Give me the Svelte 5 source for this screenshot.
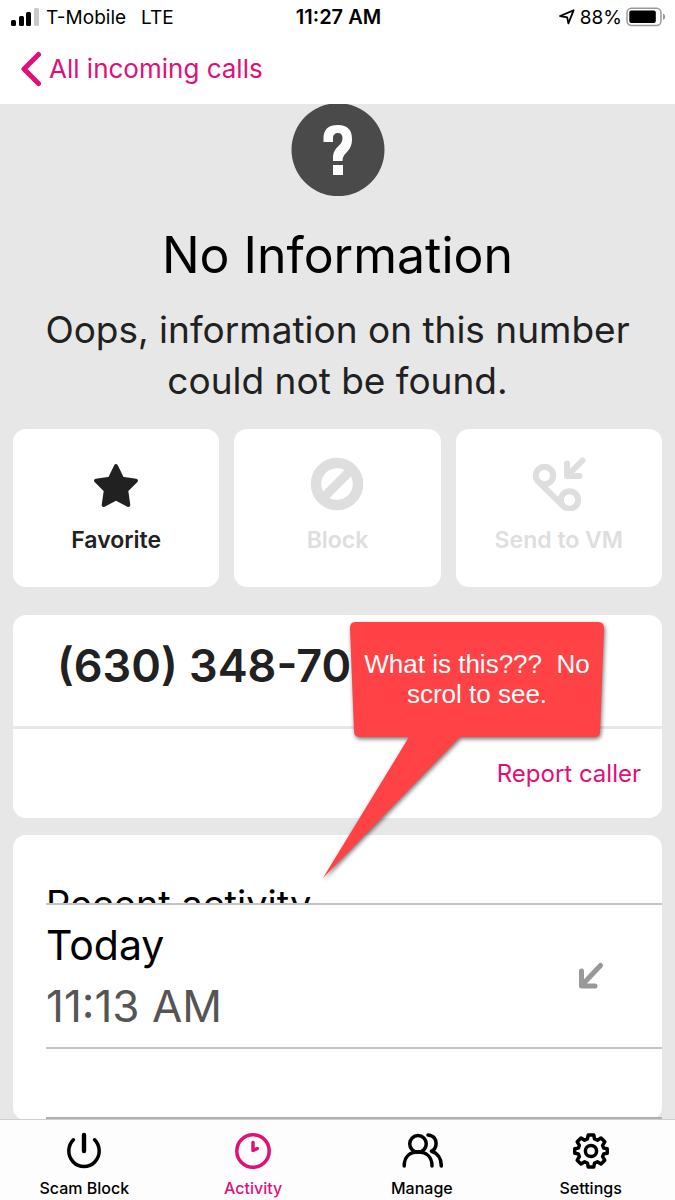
<script lang="ts">
    const tabs = ["Scam Block", "Activity", "Manage", "Settings"];
    let active = "Activity";
</script>

<div class="screen">
    <header>
        <div class="status">
            <div class="carrier">
                <svg width="28" height="18" viewBox="0 0 28 18">
                    <rect x="0" y="12" width="5" height="6" rx="1.5" />
                    <rect x="8" y="8" width="5" height="10" rx="1.5" />
                    <rect x="15" y="4" width="5" height="14" rx="1.5" />
                    <rect x="23" y="0" width="5" height="18" rx="1.5" fill="#c9c9c9" />
                </svg>
                <span>T-Mobile</span>
                <span class="network">LTE</span>
            </div>
            <time>11:27 AM</time>
            <div class="battery">
                <svg width="18" height="16" viewBox="0 0 18 16">
                    <path d="M2 7 15.6 1.3 10.4 14.4 9.2 8.3Z" fill="none" stroke="#000" stroke-width="1.8" stroke-linejoin="round" />
                </svg>
                <span>88%</span>
                <svg width="40" height="20" viewBox="0 0 40 20">
                    <rect x="1" y="1.2" width="34" height="17.3" rx="4.5" fill="#fff" stroke="#999" stroke-width="1.5" />
                    <rect x="3.3" y="3.6" width="26.5" height="12.5" rx="2" />
                    <path d="M37 6.5Q39.2 7.6 39.2 9.8T37 13Z" fill="#999" />
                </svg>
            </div>
        </div>
        <a class="back" href="#calls">
            <svg width="22" height="36" viewBox="0 0 22 36">
                <path d="M18.5 3.5 4 18 18.5 32.5" fill="none" stroke="currentColor" stroke-width="5" stroke-linecap="round" stroke-linejoin="round" />
            </svg>
            All incoming calls
        </a>
    </header>

    <main>
        <svg class="unknown" width="94" height="92" viewBox="0 0 94 92">
            <circle cx="47" cy="45.7" r="46.5" fill="#4a4a4a" />
            <path d="M32.5 38V34C32.5 25.5 37.5 21 47 21S61 26 61 35C61 42 58.5 45.5 55 49C52.3 51.7 51.5 54 51.5 57H42V54C42 48.5 44 45.5 47.5 42C50 39.5 51.5 37.5 51.5 34C51.5 31 50 29 47 29S42 31 42 34V38Z" fill="#fff" />
            <rect x="42" y="61" width="10" height="10" fill="#fff" />
        </svg>
        <h1>No Information</h1>
        <p class="lead">Oops, information on this number could not be found.</p>

        <div class="actions">
            <button>
                <svg width="54" height="54" viewBox="0 0 54 54">
                    <path d="M27 9 33.2 21.8 47 23.7 37.2 33.4 39.3 48 27 41.5 14.7 48 16.8 33.4 7 23.7 20.8 21.8Z" fill="currentColor" stroke="currentColor" stroke-width="4" stroke-linejoin="round" />
                </svg>
                Favorite
            </button>
            <button disabled>
                <svg width="54" height="54" viewBox="0 0 54 54">
                    <circle cx="27" cy="27" r="21" fill="none" stroke="currentColor" stroke-width="10.5" />
                    <path d="M13 41 41 13" stroke="currentColor" stroke-width="9" />
                </svg>
                Block
            </button>
            <button disabled>
                <svg width="54" height="54" viewBox="0 0 54 54">
                    <g fill="none" stroke="currentColor" stroke-width="6" stroke-linecap="round" stroke-linejoin="round">
                        <circle cx="12.5" cy="18.5" r="8.7" />
                        <circle cx="37.5" cy="43" r="8.7" />
                        <path d="M6.3 24.7 31.3 49.2" />
                        <path d="M50.5 3.5 36 18M35 6.5V19H47.5" />
                    </g>
                </svg>
                Send to VM
            </button>
        </div>

        <section class="card caller">
            <div class="number">(630) 348-70</div>
            <div class="report"><a href="#report">Report caller</a></div>

            <div class="callout">
                <svg width="290" height="266" viewBox="0 0 290 266">
                    <path d="M33 1H276Q282 1 282 7L278 111Q278 116 272 116H138L1 257 87 116H38Q32 116 32 110L28 7Q28 1 33 1Z" fill="#ff4245" />
                </svg>
                <p>What is this???&nbsp; No<br />scrol to see.</p>
            </div>
        </section>

        <section class="card recent">
            <h2>Recent activity</h2>
            <ul>
                <li>
                    <div>
                        <div class="day">Today</div>
                        <div class="time">11:13 AM</div>
                    </div>
                    <svg width="26" height="28" viewBox="0 0 26 28">
                        <path d="M22.5 3.5 4 23M3.5 9V24H17" fill="none" stroke="#989898" stroke-width="5" stroke-linecap="round" stroke-linejoin="round" />
                    </svg>
                </li>
                <li class="empty"></li>
            </ul>
        </section>
    </main>

    <nav>
        {#each tabs as tab}
            <button class:active={tab === active} on:click={() => (active = tab)}>
                <svg width="42" height="38" viewBox="0 0 42 38">
                    <g fill="none" stroke="currentColor" stroke-width="3.5" stroke-linecap="round" stroke-linejoin="round">
                        {#if tab === "Scam Block"}
                            <path d="M21 3V19" stroke-width="4.4" />
                            <path d="M10.4 7.8A15.2 15.6 0 1 0 31.6 7.8" />
                        {:else if tab === "Activity"}
                            <circle cx="21" cy="19" r="16.2" />
                            <path d="M21 10.5V18.5L25.3 16.5" />
                        {:else if tab === "Manage"}
                            <circle cx="17" cy="11.8" r="8.3" />
                            <path d="M3.2 34C3.2 25 8.5 20.1 17 20.1S31 25 31 34" />
                            <path d="M27 3C33 3.5 35.5 7.5 35 12.5C34.7 16 32 18.5 30.5 19.2C36.5 21 40.3 26.5 40.3 34" />
                        {:else}
                            <circle cx="21" cy="19" r="5.6" />
                            <path d="M18.3 3H23.7L24.6 7 27.4 8.2 31 6 34.8 9.8 32.6 13.4 33.7 16.1 37.2 16.8V21.2L33.7 21.9 32.6 24.6 34.8 28.2 31 32 27.4 29.8 24.6 31 23.7 35H18.3L17.4 31 14.6 29.8 11 32 7.2 28.2 9.4 24.6 8.3 21.9 4.8 21.2V16.8L8.3 16.1 9.4 13.4 7.2 9.8 11 6 14.6 8.2 17.4 7Z" />
                        {/if}
                    </g>
                </svg>
                {tab}
            </button>
        {/each}
    </nav>
</div>

<style>
    :global(body) {
        margin: 0;
        background: #e7e7e7;
    }
    .screen {
        display: flex;
        flex-direction: column;
        min-height: 100vh;
        font-family: Inter, "Liberation Sans", sans-serif;
        color: #000;
    }
    button {
        font-family: inherit;
        border: none;
        padding: 0;
    }
    a {
        color: #e20f78;
        text-decoration: none;
    }
    header {
        background: #fff;
        height: 104px;
    }
    .status {
        display: grid;
        grid-template-columns: 1fr auto 1fr;
        align-items: center;
        padding: 0 9px 0 11px;
        height: 34px;
        font-size: 19px;
    }
    .status time {
        font-size: 20px;
        font-weight: 600;
    }
    .carrier,
    .battery {
        display: flex;
        align-items: center;
        gap: 7px;
    }
    .network {
        margin-left: 8px;
    }
    .battery {
        justify-content: flex-end;
        gap: 4px;
    }
    .back {
        display: inline-flex;
        align-items: center;
        gap: 7px;
        margin-left: 20px;
        height: 69px;
        font-size: 26px;
    }
    main {
        flex: 1;
        display: flex;
        flex-direction: column;
        padding: 0 13px;
    }
    .unknown {
        align-self: center;
    }
    h1 {
        margin: 26px 0 0;
        font-size: 50px;
        font-weight: 400;
        line-height: 66px;
        text-align: center;
    }
    .lead {
        margin: 16px 20px 0;
        font-size: 37px;
        line-height: 51px;
        text-align: center;
        color: #212121;
    }
    .actions {
        display: grid;
        grid-template-columns: repeat(3, 1fr);
        gap: 15px;
        margin-top: 23px;
    }
    .actions button {
        display: flex;
        flex-direction: column;
        align-items: center;
        gap: 15px;
        height: 158px;
        padding-top: 28px;
        border-radius: 13px;
        background: #fff;
        color: #212121;
        font-size: 23px;
        font-weight: 600;
        line-height: 28px;
    }
    .actions button:disabled {
        color: #dedede;
    }
    .card {
        background: #fff;
        border-radius: 13px;
    }
    .caller {
        position: relative;
        margin-top: 28px;
    }
    .number {
        height: 111px;
        padding-left: 44px;
        border-bottom: 3px solid #e7e7e7;
        font-size: 45px;
        font-weight: 600;
        line-height: 102px;
        color: #212121;
    }
    .report {
        padding-right: 21px;
        font-size: 24px;
        line-height: 89px;
        text-align: right;
    }
    .callout {
        position: absolute;
        top: 6px;
        left: 309px;
        width: 290px;
    }
    .callout svg {
        display: block;
        filter: drop-shadow(1px 2px 2px rgba(0, 0, 0, 0.55));
    }
    .callout p {
        position: absolute;
        top: 28px;
        left: 28px;
        width: 254px;
        margin: 0;
        font-family: "Liberation Sans", Arial, sans-serif;
        font-size: 26px;
        line-height: 30px;
        text-align: center;
        white-space: nowrap;
        color: #fff;
    }
    .recent {
        flex: 1;
        margin-top: 17px;
        padding-left: 33px;
    }
    h2 {
        box-sizing: border-box;
        height: 68px;
        margin: 0;
        padding-top: 42px;
        overflow: hidden;
        font-size: 38px;
        font-weight: 400;
        line-height: 54px;
    }
    ul {
        margin: 0;
        padding: 0;
        list-style: none;
    }
    li {
        display: flex;
        align-items: center;
        justify-content: space-between;
        box-sizing: border-box;
        height: 144px;
        padding-right: 58px;
        border-top: 2px solid #c4c4c4;
    }
    .empty {
        height: 72px;
        border-bottom: 2px solid #b0b0b0;
    }
    .day,
    .time {
        font-size: 44px;
        line-height: 61px;
    }
    .day {
        font-size: 41px;
    }
    .time {
        color: #555;
    }
    nav {
        display: grid;
        grid-template-columns: repeat(4, 1fr);
        height: 80px;
        background: #fdfdfd;
        box-shadow: 0 -1px #cfcfcf;
    }
    nav button {
        display: flex;
        flex-direction: column;
        align-items: center;
        gap: 6px;
        padding-top: 12px;
        background: none;
        color: #000;
        font-size: 16px;
        font-weight: 500;
        line-height: 24px;
    }
    nav .active {
        color: #e20f78;
    }
</style>
